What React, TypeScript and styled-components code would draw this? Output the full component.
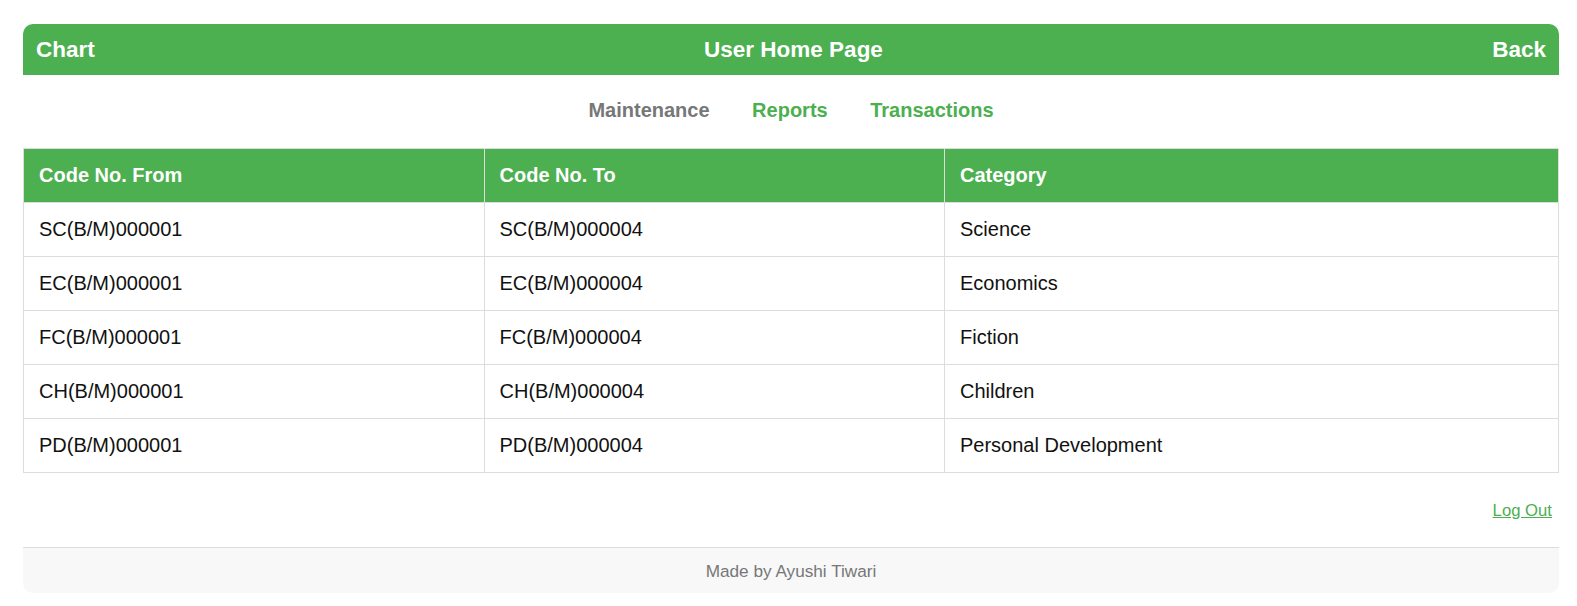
import React from "react";
import styled, { createGlobalStyle } from "styled-components";

const GlobalStyle = createGlobalStyle`
  html, body {
    margin: 0;
    padding: 0;
    background: #ffffff;
    font-family: "Liberation Sans", Arial, sans-serif;
  }
`;

const GREEN = "#4CAF50";

const Page = styled.div`
  padding: 24px 18px 13px 23px;
`;

const Header = styled.header`
  display: flex;
  justify-content: space-between;
  align-items: center;
  background: ${GREEN};
  color: #ffffff;
  padding: 12.5px 13px 12.6px 13px;
  border-radius: 10px 10px 0 0;
  font-size: 22.5px;
  font-weight: bold;
  line-height: 25.9px;
`;

const HeaderLink = styled.a`
  color: #ffffff;
  text-decoration: none;
  cursor: pointer;
`;

const Title = styled.span``;

const Nav = styled.nav`
  display: flex;
  justify-content: center;
  gap: 42.5px;
  padding: 23.6px 0 26.4px;
  line-height: 23px;
`;

const NavLink = styled.a<{ $active?: boolean }>`
  font-size: 20px;
  font-weight: bold;
  color: ${(p) => (p.$active ? "#777777" : GREEN)};
  text-decoration: none;
  cursor: pointer;
`;

const Table = styled.table`
  width: 100%;
  border-collapse: collapse;
  border: 1px solid #dddddd;
  font-size: 20px;
  line-height: 23px;
`;

const HeadCell = styled.th<{ $w: string }>`
  width: ${(p) => p.$w};
  background: ${GREEN};
  color: #ffffff;
  font-weight: bold;
  text-align: left;
  padding: 15px;
  border: 1px solid #dddddd;
`;

const Cell = styled.td`
  color: #111111;
  text-align: left;
  padding: 15px;
  border: 1px solid #dddddd;
`;

const LogoutRow = styled.div`
  display: flex;
  justify-content: flex-end;
  padding: 28px 7px 27px 0;
  line-height: 19px;
`;

const LogoutLink = styled.a`
  color: ${GREEN};
  font-size: 16.7px;
  text-decoration: underline;
  cursor: pointer;
`;

const Footer = styled.footer`
  background: #f8f8f8;
  border-top: 1px solid #dddddd;
  border-radius: 0 0 10px 10px;
  padding: 13px 0 12px;
  text-align: center;
  color: #777777;
  font-size: 17.2px;
  line-height: 20px;
`;

const rows = [
  ["SC(B/M)000001", "SC(B/M)000004", "Science"],
  ["EC(B/M)000001", "EC(B/M)000004", "Economics"],
  ["FC(B/M)000001", "FC(B/M)000004", "Fiction"],
  ["CH(B/M)000001", "CH(B/M)000004", "Children"],
  ["PD(B/M)000001", "PD(B/M)000004", "Personal Development"],
];

export default function App() {
  return (
    <>
      <GlobalStyle />
      <Page>
        <Header>
          <HeaderLink>Chart</HeaderLink>
          <Title>User Home Page</Title>
          <HeaderLink>Back</HeaderLink>
        </Header>
        <Nav>
          <NavLink $active>Maintenance</NavLink>
          <NavLink>Reports</NavLink>
          <NavLink>Transactions</NavLink>
        </Nav>
        <Table>
          <thead>
            <tr>
              <HeadCell $w="30%">Code No. From</HeadCell>
              <HeadCell $w="30%">Code No. To</HeadCell>
              <HeadCell $w="40%">Category</HeadCell>
            </tr>
          </thead>
          <tbody>
            {rows.map((r) => (
              <tr key={r[0]}>
                <Cell>{r[0]}</Cell>
                <Cell>{r[1]}</Cell>
                <Cell>{r[2]}</Cell>
              </tr>
            ))}
          </tbody>
        </Table>
        <LogoutRow>
          <LogoutLink>Log Out</LogoutLink>
        </LogoutRow>
        <Footer>Made by Ayushi Tiwari</Footer>
      </Page>
    </>
  );
}
